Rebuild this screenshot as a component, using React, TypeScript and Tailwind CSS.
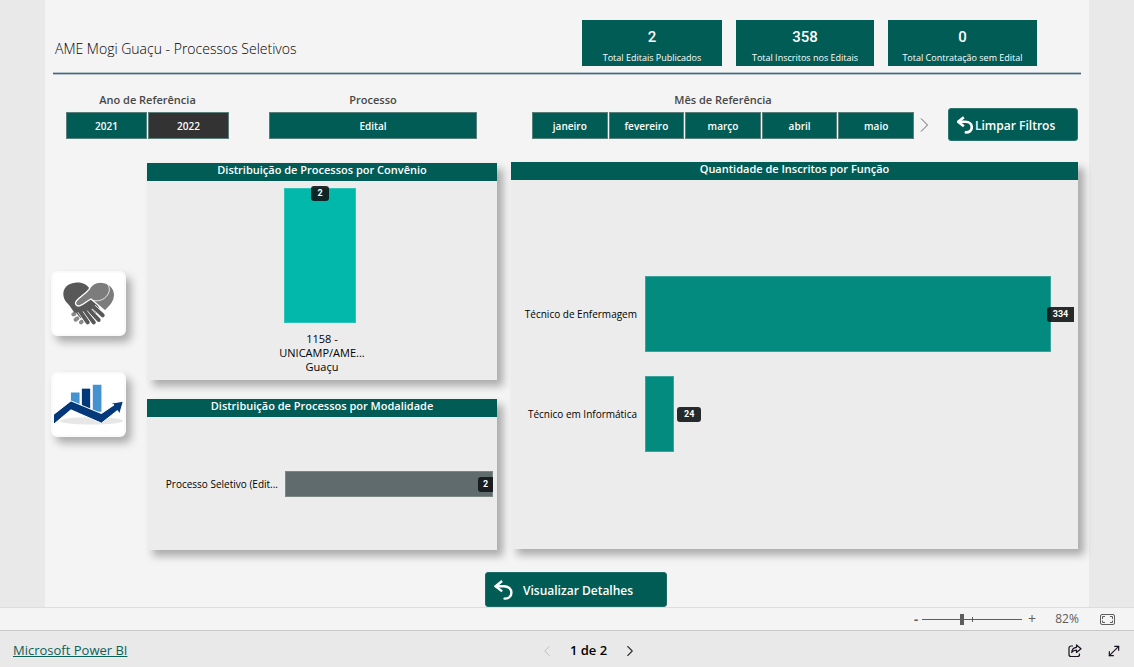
import { useState, type ReactNode } from "react";
import { ChevronLeft, ChevronRight, MoveDiagonal } from "lucide-react";

const totals = [
  { value: "2", label: "Total Editais Publicados", width: "w-[140px]" },
  { value: "358", label: "Total Inscritos nos Editais", width: "w-[138px]" },
  { value: "0", label: "Total Contratação sem Edital", width: "w-[149px]" },
];

const months = ["janeiro", "fevereiro", "março", "abril", "maio"];

const functions = [
  { name: "Técnico de Enfermagem", count: 334 },
  { name: "Técnico em Informática", count: 24 },
];

function UndoIcon({ className }: { className: string }) {
  return (
    <svg viewBox="0 0 54 58" className={className} fill="none" stroke="currentColor" aria-hidden="true">
      <path d="M23 3 4 18l19 15" />
      <path d="M5 18h23c14 0 22 9 22 19 0 11-9 17-20 17" strokeLinecap="round" />
    </svg>
  );
}

function HandsIcon() {
  const fingers = ["M66 52 119 100", "M56 60 107 114", "M46 64 92 121", "M36 66 74 121"];
  return (
    <svg viewBox="0 0 156 131" className="w-[52px]" fill="none" strokeLinecap="round" aria-hidden="true">
      <g stroke="#8a8a8a" strokeWidth="12">
        <path d="M31 97l3-1M38 113l5-4M54 121l2-2" />
      </g>
      <path d="M79 19C68 3 51 0 36 2 14 4 0 18 1 38c1 18 14 27 24 37l28 34 60-20-20-46Z" fill="#585858" />
      {fingers.map((d) => (
        <g key={d}>
          <path d={d} stroke="#fff" strokeWidth="16" />
          <path d={d} stroke="#585858" strokeWidth="12" />
        </g>
      ))}
      <path d="M14 62 28 40l54-12 22 30-20 26-50 8Z" fill="#585858" />
      <path
        d="M78 22C88 3 106-1 119 1c21 2 36 18 36 39 0 20-14 34-29 47L84 51c-12 5-20 15-33 20-10 4-17-5-11-14 12-14 26-20 38-35Z"
        fill="#7c7c7c"
        stroke="#fff"
        strokeWidth="4"
      />
      <path d="M134 7c10 14 5 30-10 42-12 8-24 9-34 6" stroke="#fff" strokeWidth="2.5" />
    </svg>
  );
}

function GrowthIcon() {
  return (
    <svg viewBox="0 0 208 122" className="w-[69px]" aria-hidden="true">
      <ellipse cx="113" cy="111" rx="96" ry="11" fill="#e7e7e7" />
      <path d="M51 26h26v40H51zM117 2h26v82h-26z" fill="#4492cf" />
      <path d="M84 14h25v60H84z" fill="#03387a" />
      <path
        d="M-4 94 51 51l92 38 38-26-10-5 38-6-11 38-7-10-48 38-92-40-55 46Z"
        fill="#03387a"
        stroke="#fff"
        strokeWidth="3"
      />
    </svg>
  );
}

function FilterButton({ active = false, onClick, children }: { active?: boolean; onClick?: () => void; children: ReactNode }) {
  return (
    <button
      type="button"
      aria-pressed={active}
      onClick={onClick}
      className={`h-[27px] min-w-0 flex-1 border border-[#5a7f7a] pt-px text-[10px] font-semibold text-white ${active ? "bg-[#333333]" : "bg-[#015c55]"}`}
    >
      {children}
    </button>
  );
}

function FilterGroup({ title, className, children }: { title: string; className: string; children: ReactNode }) {
  return (
    <fieldset className={`min-w-0 ${className}`}>
      <legend className="mx-auto mb-1 text-[11px] leading-4 font-semibold text-[#474747]">{title}</legend>
      <div className="flex gap-px">{children}</div>
    </fieldset>
  );
}

function Panel({ title, className = "", children }: { title: string; className?: string; children: ReactNode }) {
  return (
    <section className={`flex flex-col bg-[#ececec] shadow-[6px_6px_8px_rgba(0,0,0,0.3)] ${className}`}>
      <h2 className="h-[18px] bg-[#015c55] text-center text-[11px] leading-[14px] font-semibold text-white">{title}</h2>
      {children}
    </section>
  );
}

function Badge({ className, children }: { className: string; children: ReactNode }) {
  return (
    <span className={`absolute flex h-[15px] items-center justify-center bg-[#111516]/90 pt-px font-[Roboto] text-[9px] font-bold text-white ${className}`}>
      {children}
    </span>
  );
}

export default function App() {
  const [year, setYear] = useState("2022");
  const [zoom, setZoom] = useState(40);

  return (
    <div className="flex min-h-screen flex-col bg-[#e9e9e9] font-['Open_Sans','Noto_Sans',sans-serif] text-black">
      <main className="mx-[45px] flex flex-1 flex-col bg-[#f4f4f4] px-2">
        <header className="flex h-[72px] justify-between pt-5 pr-11">
          <h1 className="pt-4 pl-[2px] text-[14px] leading-[26px] font-light text-black">AME Mogi Guaçu - Processos Seletivos</h1>
          <div className="flex gap-[14px]">
            {totals.map((t) => (
              <div key={t.label} className={`flex h-[46px] flex-col items-center bg-[#015c55] pt-[7px] text-white ${t.width}`}>
                <strong className="font-[Roboto] text-[15px] leading-5 font-medium">{t.value}</strong>
                <span className="pt-[3px] text-[9px] leading-4 font-medium whitespace-nowrap">{t.label}</span>
              </div>
            ))}
          </div>
        </header>
        <div className="h-[3px] border-y border-[#b3c1ca] bg-[#456880]" />

        <div className="flex h-[87px] items-start pt-[17px] pr-[3px] pl-[13px]">
          <FilterGroup title="Ano de Referência" className="flex-[163]">
            {["2021", "2022"].map((y) => (
              <FilterButton key={y} active={year === y} onClick={() => setYear(y)}>
                {y}
              </FilterButton>
            ))}
          </FilterGroup>
          <FilterGroup title="Processo" className="ml-10 flex-[208]">
            <FilterButton>Edital</FilterButton>
          </FilterGroup>
          <FilterGroup title="Mês de Referência" className="ml-[55px] flex-[382]">
            {months.map((m) => (
              <FilterButton key={m}>{m}</FilterButton>
            ))}
          </FilterGroup>
          <button type="button" aria-label="Próximos meses" className="mt-[25px] ml-1 text-[#666666]">
            <svg viewBox="0 0 14 16" className="h-4 w-[14px]" fill="none" stroke="currentColor" aria-hidden="true">
              <path d="m3 1.500 6.500 6.500L3 14.500" />
            </svg>
          </button>
          <button
            type="button"
            className="mt-4 ml-4 flex h-[33px] w-[130px] items-center gap-[2px] rounded-[3px] border border-[#2a746e] bg-[#015c55] pl-2 text-[12px] font-semibold whitespace-nowrap text-white"
          >
            <UndoIcon className="h-[18px] w-4 stroke-9" />
            <span className="pt-[2px]">Limpar Filtros</span>
          </button>
        </div>

        <div className="grid flex-1 grid-cols-[75px_minmax(0,369fr)_minmax(0,581fr)] pr-[3px]">
          <nav className="-ml-[2px] flex flex-col gap-9 pt-[109px]">
            <button
              type="button"
              aria-label="Convênios"
              className="flex h-[65px] w-[75px] items-center justify-center rounded-md border-2 border-[#fafafa] bg-white shadow-[5px_6px_8px_rgba(0,0,0,0.3)]"
            >
              <HandsIcon />
            </button>
            <button
              type="button"
              aria-label="Indicadores"
              className="flex h-[65px] w-[75px] items-center justify-center rounded-md border-2 border-[#fafafa] bg-white shadow-[5px_6px_8px_rgba(0,0,0,0.3)]"
            >
              <GrowthIcon />
            </button>
          </nav>

          <div className="ml-[19px] flex flex-col gap-[19px] pt-px">
            <Panel title="Distribuição de Processos por Convênio" className="h-[217px]">
              <div className="flex flex-col items-center pt-[7px]">
                <div className="relative mr-1 h-[135px] w-[72px] border border-[#2cc2b6] bg-[#01b8aa]">
                  <Badge className="-top-[3px] left-[26px] w-[18px] rounded-[3px]">2</Badge>
                </div>
                <p className="w-24 pt-[9px] text-center text-[11px] leading-[14px]">1158 - UNICAMP/AME... Guaçu</p>
              </div>
            </Panel>
            <Panel title="Distribuição de Processos por Modalidade" className="h-[151px]">
              <div className="flex flex-1 items-center pr-1">
                <span className="w-[138px] pt-px pr-[7px] text-right text-[10px] whitespace-nowrap">Processo Seletivo (Edit...</span>
                <div className="relative h-[26px] flex-1 border border-[#7b8685] bg-[#5f6b6d]">
                  <Badge className="top-[5px] -right-px w-[15px] rounded-l-[3px]">2</Badge>
                </div>
              </div>
            </Panel>
          </div>

          <Panel title="Quantidade de Inscritos por Função" className="ml-[14px] h-[387px]">
            <div className="flex flex-1 flex-col justify-center gap-6 pr-[27px] pb-[2px]">
              {functions.map((f) => (
                <div key={f.name} className="flex h-[76px] items-center">
                  <span className="w-[134px] pt-[2px] pr-2 text-right text-[10px] whitespace-nowrap">{f.name}</span>
                  <div className="h-full flex-1">
                    <div className="relative h-full border border-[#3aa49c] bg-[#038b80]" style={{ width: `${(f.count / 334) * 100}%` }}>
                      <Badge className={f.count === 334 ? "top-[30px] -right-6 w-[27px] rounded-l-[3px]" : "top-[30px] -right-7 w-6 rounded-[3px]"}>
                        {f.count}
                      </Badge>
                    </div>
                  </div>
                </div>
              ))}
            </div>
          </Panel>
        </div>

        <button
          type="button"
          className="ml-[432px] flex h-[35px] w-[182px] items-center gap-[10px] rounded-[3px] border border-[#1d6b65] bg-[#015c55] pl-2 text-[12px] font-semibold text-white"
        >
          <UndoIcon className="h-5 w-[19px] stroke-7" />
          <span className="pt-[3px]">Visualizar Detalhes</span>
        </button>
      </main>

      <div className="flex h-6 items-center justify-end border-y border-t-[#dddddd] border-b-[#c8c8c8] bg-[#f4f4f4] pr-[19px] text-[#605e5c]">
        <button type="button" aria-label="Diminuir zoom" className="w-3 text-center text-[13px] leading-5 font-bold" onClick={() => setZoom(Math.max(0, zoom - 5))}>
          -
        </button>
        <div className="relative flex items-center">
          <input
            type="range"
            aria-label="Zoom"
            value={zoom}
            onChange={(e) => setZoom(Number(e.target.value))}
            className="h-[11px] w-[100px] appearance-none bg-transparent [&::-webkit-slider-runnable-track]:h-px [&::-webkit-slider-runnable-track]:bg-[#605e5c] [&::-webkit-slider-thumb]:-mt-[5px] [&::-webkit-slider-thumb]:h-[11px] [&::-webkit-slider-thumb]:w-1 [&::-webkit-slider-thumb]:appearance-none [&::-webkit-slider-thumb]:bg-[#605e5c]"
          />
          <span className="pointer-events-none absolute left-[50px] h-[5px] w-px bg-[#605e5c]" />
        </div>
        <button type="button" aria-label="Aumentar zoom" className="w-5 text-center text-[14px] leading-5" onClick={() => setZoom(Math.min(100, zoom + 5))}>
          +
        </button>
        <span className="w-[50px] text-center text-[12px]">82%</span>
        <button type="button" aria-label="Ajustar à página" className="ml-2">
          <svg viewBox="0 0 15 11" className="h-[11px] w-[15px]" fill="none" stroke="currentColor" aria-hidden="true">
            <rect x="0.5" y="0.5" width="14" height="10" rx="1.5" />
            <path d="M5 2.5H2.5V5M2.5 6.5v2H5M10 2.5h2.5V5M12.5 6.5v2H10" />
          </svg>
        </button>
      </div>

      <footer className="grid h-9 grid-cols-[1fr_auto_1fr] items-center pt-[3px] pr-3 pl-[13px]">
        <a href="https://powerbi.microsoft.com" className="justify-self-start text-[13px] font-medium text-[#0c6259] underline">
          Microsoft Power BI
        </a>
        <div className="flex items-center gap-[14px] pl-[42px]">
          <button type="button" aria-label="Página anterior" disabled className="text-[#bdbdbd]">
            <ChevronLeft size={18} strokeWidth={1.3} />
          </button>
          <span className="text-[13px] font-semibold">1 de 2</span>
          <button type="button" aria-label="Próxima página" className="text-[#333333]">
            <ChevronRight size={18} strokeWidth={1.5} />
          </button>
        </div>
        <div className="flex items-center gap-6 justify-self-end text-[#1b1320]">
          <button type="button" aria-label="Compartilhar">
            <svg viewBox="0 0 14 14" className="size-[14px]" fill="none" stroke="currentColor" strokeWidth="1.2" strokeLinejoin="round" aria-hidden="true">
              <path d="M5 2H3a2 2 0 0 0-2 2v6.500a2 2 0 0 0 2 2h6.500a2 2 0 0 0 2-2V9.500" />
              <path d="M8.500 1v2.300C5.500 3.500 4 5.300 3.700 8.500 5 6.700 6.500 6.200 8.500 6.200v2.300L13 4.700Z" />
            </svg>
          </button>
          <button type="button" aria-label="Tela inteira">
            <MoveDiagonal size={16} strokeWidth={1.8} />
          </button>
        </div>
      </footer>
    </div>
  );
}
